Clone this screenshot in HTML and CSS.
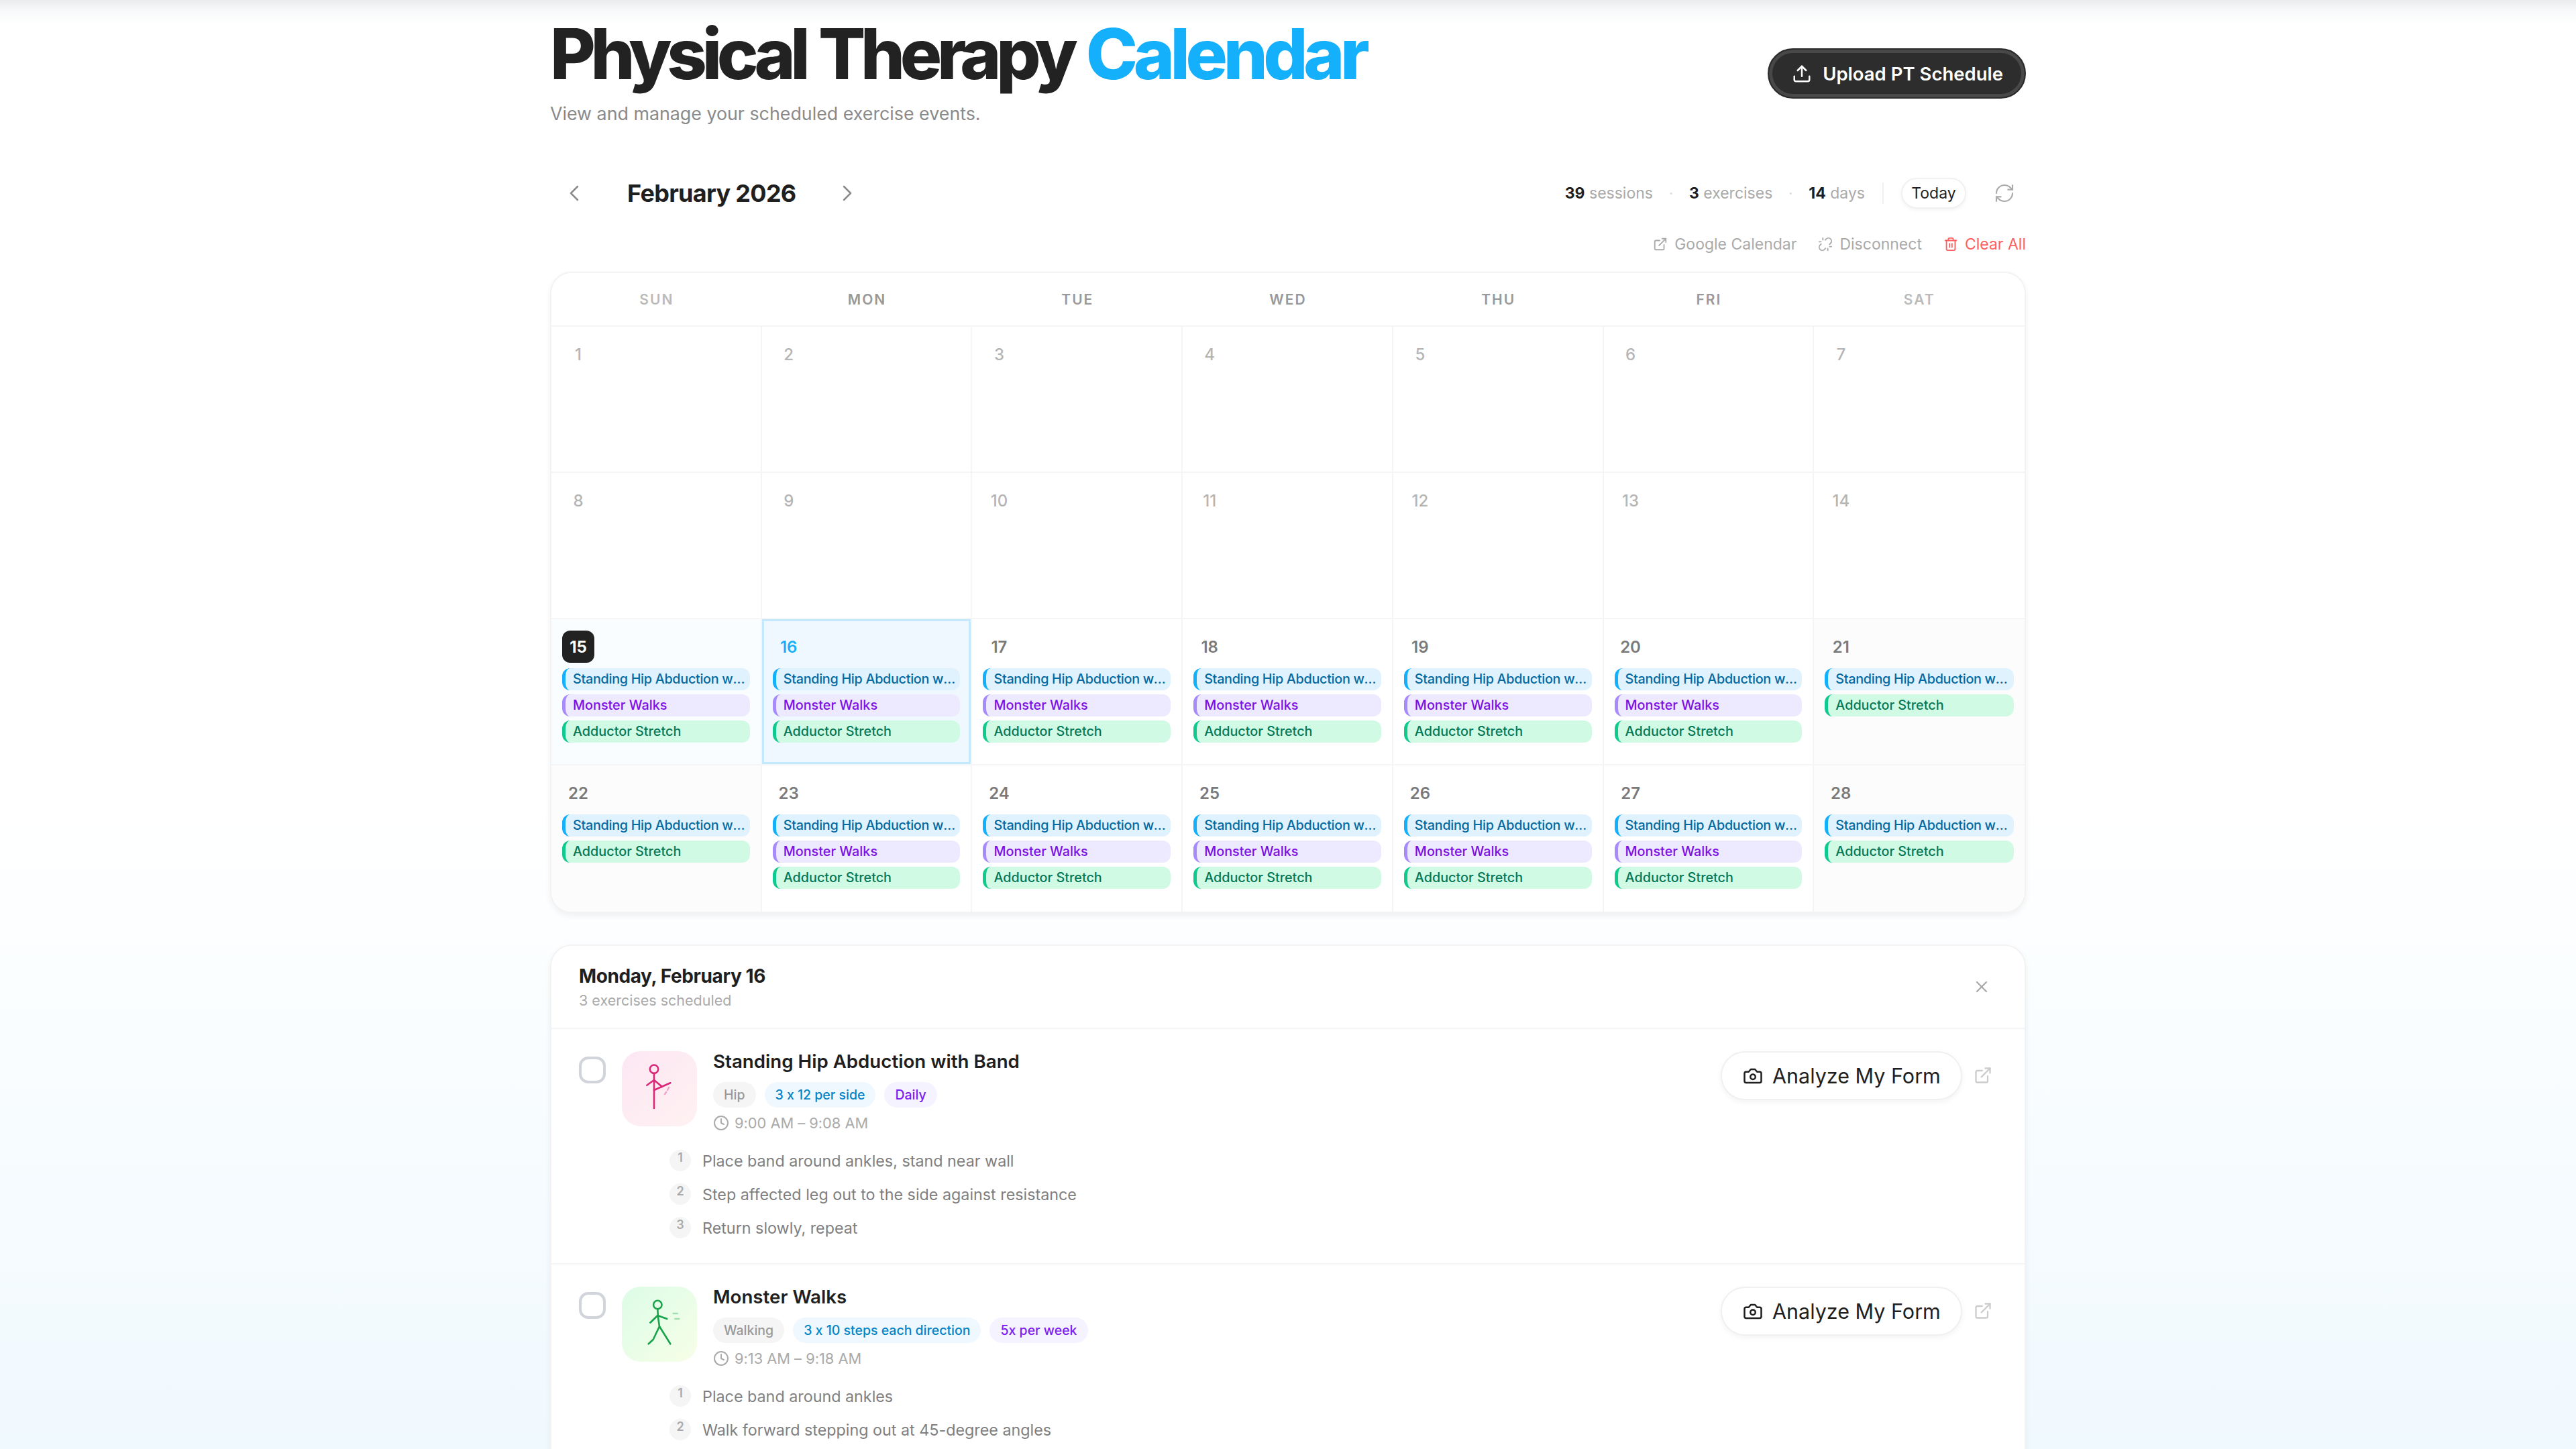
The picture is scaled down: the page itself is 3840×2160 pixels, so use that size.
FILE: index.html
```html
<!DOCTYPE html>
<html>
<head>
    <title>Physical Therapy Calendar</title>
    <link rel="stylesheet" href="styles.css">
</head>
<body>
    <div class="top-shade"></div>
    <div class="page">
        <div class="page-head">
            <div>
                <h1>Physical Therapy <span class="accent">Calendar</span></h1>
                <p class="subtitle">View and manage your scheduled exercise events.</p>
            </div>
            <button class="upload-btn">
                <svg class="icon" width="30" height="30" viewBox="0 0 24 24"><path d="M21 15v4a2 2 0 0 1-2 2H5a2 2 0 0 1-2-2v-4"/><polyline points="17 8 12 3 7 8"/><line x1="12" y1="3" x2="12" y2="15"/></svg>
                Upload PT Schedule
            </button>
        </div>

        <div class="month-row">
            <div class="month-nav">
                <svg class="icon chevron" width="40" height="40" viewBox="0 0 24 24"><path d="m15 18-6-6 6-6"/></svg>
                <h2>February 2026</h2>
                <svg class="icon chevron" width="40" height="40" viewBox="0 0 24 24"><path d="m9 18 6-6-6-6"/></svg>
            </div>
            <div class="stats">
                <span class="stat"><b>39</b> sessions</span>
                <span class="dot">·</span>
                <span class="stat"><b>3</b> exercises</span>
                <span class="dot">·</span>
                <span class="stat"><b>14</b> days</span>
                <span class="stats-divider"></span>
                <button class="today-btn">Today</button>
                <svg class="icon refresh" width="32" height="32" viewBox="0 0 24 24"><path d="M3 12a9 9 0 0 1 9-9 9.75 9.75 0 0 1 6.74 2.74L21 8"/><path d="M21 3v5h-5"/><path d="M21 12a9 9 0 0 1-9 9 9.75 9.75 0 0 1-6.74-2.74L3 16"/><path d="M8 16H3v5"/></svg>
            </div>
        </div>

        <div class="actions">
            <span class="action">
                <svg class="icon" width="22" height="22" viewBox="0 0 24 24"><path d="M18 13v6a2 2 0 0 1-2 2H5a2 2 0 0 1-2-2V8a2 2 0 0 1 2-2h6"/><polyline points="15 3 21 3 21 9"/><line x1="10" y1="14" x2="21" y2="3"/></svg>
                Google Calendar
            </span>
            <span class="action">
                <svg class="icon" width="22" height="22" viewBox="0 0 24 24"><path d="m18.84 12.25 1.72-1.71h-.02a5.004 5.004 0 0 0-.12-7.07 5.006 5.006 0 0 0-6.95 0l-1.72 1.71"/><path d="m5.17 11.75-1.71 1.71a5.004 5.004 0 0 0 .12 7.07 5.006 5.006 0 0 0 6.95 0l1.71-1.71"/><line x1="8" y1="2" x2="8" y2="5"/><line x1="2" y1="8" x2="5" y2="8"/><line x1="16" y1="19" x2="16" y2="22"/><line x1="19" y1="16" x2="22" y2="16"/></svg>
                Disconnect
            </span>
            <span class="action danger">
                <svg class="icon" width="22" height="22" viewBox="0 0 24 24"><path d="M3 6h18"/><path d="M19 6v14c0 1-1 2-2 2H7c-1 0-2-1-2-2V6"/><path d="M8 6V4c0-1 1-2 2-2h4c1 0 2 1 2 2v2"/><line x1="10" y1="11" x2="10" y2="17"/><line x1="14" y1="11" x2="14" y2="17"/></svg>
                Clear All
            </span>
        </div>

        <div class="card calendar">
            <div class="weekdays">
                <div class="weekend">SUN</div><div>MON</div><div>TUE</div><div>WED</div><div>THU</div><div>FRI</div><div class="weekend">SAT</div>
            </div>
            <div class="days">
                <div class="day"><span class="num muted">1</span></div>
                <div class="day"><span class="num muted">2</span></div>
                <div class="day"><span class="num muted">3</span></div>
                <div class="day"><span class="num muted">4</span></div>
                <div class="day"><span class="num muted">5</span></div>
                <div class="day"><span class="num muted">6</span></div>
                <div class="day"><span class="num muted">7</span></div>
                <div class="day"><span class="num muted">8</span></div>
                <div class="day"><span class="num muted">9</span></div>
                <div class="day"><span class="num muted">10</span></div>
                <div class="day"><span class="num muted">11</span></div>
                <div class="day"><span class="num muted">12</span></div>
                <div class="day"><span class="num muted">13</span></div>
                <div class="day"><span class="num muted">14</span></div>

                <div class="day today">
                    <span class="num">15</span>
                    <div class="chip blue">Standing Hip Abduction with Band</div>
                    <div class="chip purple">Monster Walks</div>
                    <div class="chip green">Adductor Stretch</div>
                </div>
                <div class="day selected">
                    <span class="num">16</span>
                    <div class="chip blue">Standing Hip Abduction with Band</div>
                    <div class="chip purple">Monster Walks</div>
                    <div class="chip green">Adductor Stretch</div>
                </div>
                <div class="day">
                    <span class="num">17</span>
                    <div class="chip blue">Standing Hip Abduction with Band</div>
                    <div class="chip purple">Monster Walks</div>
                    <div class="chip green">Adductor Stretch</div>
                </div>
                <div class="day">
                    <span class="num">18</span>
                    <div class="chip blue">Standing Hip Abduction with Band</div>
                    <div class="chip purple">Monster Walks</div>
                    <div class="chip green">Adductor Stretch</div>
                </div>
                <div class="day">
                    <span class="num">19</span>
                    <div class="chip blue">Standing Hip Abduction with Band</div>
                    <div class="chip purple">Monster Walks</div>
                    <div class="chip green">Adductor Stretch</div>
                </div>
                <div class="day">
                    <span class="num">20</span>
                    <div class="chip blue">Standing Hip Abduction with Band</div>
                    <div class="chip purple">Monster Walks</div>
                    <div class="chip green">Adductor Stretch</div>
                </div>
                <div class="day tinted">
                    <span class="num">21</span>
                    <div class="chip blue">Standing Hip Abduction with Band</div>
                    <div class="chip green">Adductor Stretch</div>
                </div>

                <div class="day tinted">
                    <span class="num">22</span>
                    <div class="chip blue">Standing Hip Abduction with Band</div>
                    <div class="chip green">Adductor Stretch</div>
                </div>
                <div class="day">
                    <span class="num">23</span>
                    <div class="chip blue">Standing Hip Abduction with Band</div>
                    <div class="chip purple">Monster Walks</div>
                    <div class="chip green">Adductor Stretch</div>
                </div>
                <div class="day">
                    <span class="num">24</span>
                    <div class="chip blue">Standing Hip Abduction with Band</div>
                    <div class="chip purple">Monster Walks</div>
                    <div class="chip green">Adductor Stretch</div>
                </div>
                <div class="day">
                    <span class="num">25</span>
                    <div class="chip blue">Standing Hip Abduction with Band</div>
                    <div class="chip purple">Monster Walks</div>
                    <div class="chip green">Adductor Stretch</div>
                </div>
                <div class="day">
                    <span class="num">26</span>
                    <div class="chip blue">Standing Hip Abduction with Band</div>
                    <div class="chip purple">Monster Walks</div>
                    <div class="chip green">Adductor Stretch</div>
                </div>
                <div class="day">
                    <span class="num">27</span>
                    <div class="chip blue">Standing Hip Abduction with Band</div>
                    <div class="chip purple">Monster Walks</div>
                    <div class="chip green">Adductor Stretch</div>
                </div>
                <div class="day tinted">
                    <span class="num">28</span>
                    <div class="chip blue">Standing Hip Abduction with Band</div>
                    <div class="chip green">Adductor Stretch</div>
                </div>
            </div>
        </div>

        <div class="card detail">
            <div class="detail-head">
                <div>
                    <h3>Monday, February 16</h3>
                    <p class="detail-sub">3 exercises scheduled</p>
                </div>
                <svg class="icon close" width="28" height="28" viewBox="0 0 24 24"><path d="M18 6 6 18"/><path d="m6 6 12 12"/></svg>
            </div>

            <div class="exercise">
                <div class="exercise-top">
                    <span class="check"></span>
                    <svg class="figure pink" width="112" height="112" viewBox="0 0 112 112">
                        <circle cx="48" cy="26.7" r="6.2"/>
                        <path d="M48 33v52"/>
                        <path d="M37.3 50.7 48 43l12 10"/>
                        <path d="M48 58l24.3-10.7"/>
                        <path class="faint" d="M70 54l-2 4M66 61l-2 3"/>
                    </svg>
                    <div class="exercise-info">
                        <h4>Standing Hip Abduction with Band</h4>
                        <div class="tags">
                            <span class="tag grey">Hip</span>
                            <span class="tag sky">3 x 12 per side</span>
                            <span class="tag violet">Daily</span>
                        </div>
                        <div class="time">
                            <svg class="icon" width="24" height="24" viewBox="0 0 24 24"><circle cx="12" cy="12" r="10"/><polyline points="12 6 12 12 16 14"/></svg>
                            9:00 AM – 9:08 AM
                        </div>
                    </div>
                    <button class="analyze-btn">
                        <svg class="icon" width="30" height="30" viewBox="0 0 24 24"><path d="M14.5 4h-5L7 7H4a2 2 0 0 0-2 2v9a2 2 0 0 0 2 2h16a2 2 0 0 0 2-2V9a2 2 0 0 0-2-2h-3l-2.5-3z"/><circle cx="12" cy="13" r="3"/></svg>
                        Analyze My Form
                    </button>
                    <svg class="icon ext" width="28" height="28" viewBox="0 0 24 24"><path d="M18 13v6a2 2 0 0 1-2 2H5a2 2 0 0 1-2-2V8a2 2 0 0 1 2-2h6"/><polyline points="15 3 21 3 21 9"/><line x1="10" y1="14" x2="21" y2="3"/></svg>
                </div>
                <ol class="steps">
                    <li><span class="step-no">1</span>Place band around ankles, stand near wall</li>
                    <li><span class="step-no">2</span>Step affected leg out to the side against resistance</li>
                    <li><span class="step-no">3</span>Return slowly, repeat</li>
                </ol>
            </div>

            <div class="exercise">
                <div class="exercise-top">
                    <span class="check"></span>
                    <svg class="figure mint" width="112" height="112" viewBox="0 0 112 112">
                        <circle cx="53.3" cy="27" r="6.2"/>
                        <path d="M53.3 33.5 54 46l2 13.3"/>
                        <path d="M42.3 53.7 53.3 43l14 5"/>
                        <path d="M39.7 85.3 46.7 78.7 56 59.3l16.3 26"/>
                        <path class="faint" d="M76.7 40h6M79.3 48h6"/>
                    </svg>
                    <div class="exercise-info">
                        <h4>Monster Walks</h4>
                        <div class="tags">
                            <span class="tag grey">Walking</span>
                            <span class="tag sky">3 x 10 steps each direction</span>
                            <span class="tag violet">5x per week</span>
                        </div>
                        <div class="time">
                            <svg class="icon" width="24" height="24" viewBox="0 0 24 24"><circle cx="12" cy="12" r="10"/><polyline points="12 6 12 12 16 14"/></svg>
                            9:13 AM – 9:18 AM
                        </div>
                    </div>
                    <button class="analyze-btn">
                        <svg class="icon" width="30" height="30" viewBox="0 0 24 24"><path d="M14.5 4h-5L7 7H4a2 2 0 0 0-2 2v9a2 2 0 0 0 2 2h16a2 2 0 0 0 2-2V9a2 2 0 0 0-2-2h-3l-2.5-3z"/><circle cx="12" cy="13" r="3"/></svg>
                        Analyze My Form
                    </button>
                    <svg class="icon ext" width="28" height="28" viewBox="0 0 24 24"><path d="M18 13v6a2 2 0 0 1-2 2H5a2 2 0 0 1-2-2V8a2 2 0 0 1 2-2h6"/><polyline points="15 3 21 3 21 9"/><line x1="10" y1="14" x2="21" y2="3"/></svg>
                </div>
                <ol class="steps">
                    <li><span class="step-no">1</span>Place band around ankles</li>
                    <li><span class="step-no">2</span>Walk forward stepping out at 45-degree angles</li>
                </ol>
            </div>
        </div>
    </div>
</body>
</html>
```

FILE: styles.css
```css
* {
    box-sizing: border-box;
}

html, body {
    height: 2160px;
    overflow: hidden;
}

body {
    margin: 0;
    font-family: Inter, "Liberation Sans", sans-serif;
    font-feature-settings: "calt" 0;
    color: #1f1f1f;
    background: linear-gradient(180deg, #ffffff 55%, #f0f9fe 100%);
}

.top-shade {
    position: absolute;
    top: 0;
    left: 0;
    right: 0;
    height: 38px;
    background: linear-gradient(180deg, #e9ebed 0%, #f8f9fa 40%, rgba(255, 255, 255, 0) 100%);
}

.page {
    position: relative;
    width: 2200px;
    margin: 0 auto;
    padding-top: 28px;
}

.icon {
    fill: none;
    stroke: currentColor;
    stroke-width: 2;
    stroke-linecap: round;
    stroke-linejoin: round;
    flex-shrink: 0;
}

button {
    font-family: inherit;
    font-feature-settings: inherit;
    cursor: pointer;
}

/* header */
.page-head {
    display: flex;
    justify-content: space-between;
    align-items: center;
}

h1 {
    margin: 0;
    font-size: 104px;
    line-height: 104px;
    font-weight: 800;
    letter-spacing: -7.3px;
    word-spacing: 4px;
    color: #222;
}

.accent {
    color: #14b0fc;
    letter-spacing: -6.4px;
}

.subtitle {
    margin: 19px 0 0;
    font-size: 26.8px;
    line-height: 36px;
    color: #8a8a8a;
}

.upload-btn {
    display: flex;
    align-items: center;
    gap: 16px;
    height: 75px;
    padding: 0 32px 0 34px;
    margin-top: 4px;
    border: 2px solid #2b2b2b;
    border-radius: 38px;
    background: #2d2d2d;
    box-shadow: inset 0 0 0 5px #484848;
    color: #fff;
    font-size: 27.5px;
    font-weight: 600;
}

/* month row */
.month-row {
    display: flex;
    justify-content: space-between;
    align-items: center;
    height: 46px;
    margin-top: 78px;
}

.month-nav {
    display: flex;
    align-items: center;
    padding-left: 16px;
}

.chevron {
    color: #8a8a8a;
    stroke-width: 1.5;
}

.month-nav h2 {
    width: 367px;
    margin: 0;
    padding-left: 59px;
    font-size: 36px;
    font-weight: 700;
    letter-spacing: -0.7px;
    white-space: nowrap;
    color: #1f1f1f;
}

.stats {
    display: flex;
    align-items: center;
    font-size: 23px;
    color: #aaa;
}

.stat b {
    color: #1f1f1f;
    font-weight: 700;
}

.dot {
    width: 54px;
    text-align: center;
    color: #ddd;
}

.stats-divider {
    width: 2px;
    height: 32px;
    margin: 0 26px;
    background: #efefef;
}

.today-btn {
    width: 97px;
    height: 46px;
    padding: 0;
    border: 2px solid #f1f1f1;
    border-radius: 23px;
    background: #fff;
    box-shadow: 0 2px 6px rgba(0, 0, 0, 0.05);
    color: #1f1f1f;
    font-size: 23px;
}

.refresh {
    color: #aaa;
    stroke-width: 1.6;
    margin: 0 16px 0 41px;
}

.actions {
    display: flex;
    justify-content: flex-end;
    align-items: center;
    gap: 32px;
    height: 30px;
    margin-top: 38px;
    font-size: 23px;
    color: #aaa;
}

.action {
    display: flex;
    align-items: center;
    gap: 10px;
}

.danger {
    color: #ff5f5f;
}

/* calendar */
.card {
    background: #fff;
    border: 2px solid #f3f3f3;
    border-radius: 32px;
    box-shadow: 0 4px 10px rgba(0, 0, 0, 0.06);
    overflow: hidden;
}

.calendar {
    margin-top: 26px;
}

.weekdays {
    display: grid;
    grid-template-columns: repeat(7, minmax(0, 1fr));
    height: 80px;
    border-bottom: 2px solid #f5f5f5;
}

.weekdays div {
    text-align: center;
    line-height: 80px;
    font-size: 21px;
    font-weight: 600;
    letter-spacing: 2px;
    color: #999;
}

.weekdays .weekend {
    color: #bbb;
}

.days {
    display: grid;
    grid-template-columns: repeat(7, minmax(0, 1fr));
    grid-auto-rows: 218px;
}

.day {
    min-width: 0;
    padding: 17px 16px 0;
    border-right: 2px solid #f5f5f5;
    border-bottom: 2px solid #f5f5f5;
}

.day:nth-child(7n) {
    border-right: none;
}

.day:nth-last-child(-n+7) {
    border-bottom: none;
}

.tinted {
    background: #fcfcfc;
}

.today {
    background: #fafdff;
}

.selected {
    background: #f0f8ff;
    box-shadow: inset 0 0 0 3px #c4e9ff;
}

.num {
    display: flex;
    align-items: center;
    justify-content: center;
    width: 48px;
    height: 48px;
    margin-bottom: 8px;
    border-radius: 12px;
    font-size: 24px;
    font-weight: 600;
    color: #7a7a7a;
}

.num.muted {
    color: #b5b5b5;
    font-weight: 500;
}

.today .num {
    background: #222;
    color: #fff;
    font-weight: 700;
}

.selected .num {
    color: #14b0fc;
}

.chip {
    height: 33px;
    margin-bottom: 6px;
    padding: 0 6px 0 11px;
    border-left: 5px solid;
    border-radius: 12px;
    font-size: 19.8px;
    font-weight: 500;
    line-height: 32px;
    white-space: nowrap;
    overflow: hidden;
    text-overflow: ellipsis;
}

.chip.blue {
    background: #e0f2fe;
    border-color: #14b0fc;
    color: #0369a1;
    letter-spacing: -0.3px;
}

.chip.purple {
    background: #ede9fe;
    border-color: #a78bfa;
    color: #7c0fe6;
}

.chip.green {
    background: #d1fae5;
    border-color: #10c98f;
    color: #047857;
}

/* selected day panel */
.detail {
    margin-top: 47px;
}

.detail-head {
    display: flex;
    justify-content: space-between;
    align-items: center;
    height: 124px;
    padding: 0 50px 0 41px;
    border-bottom: 2px solid #f5f5f5;
}

h3 {
    margin: 0;
    font-size: 28px;
    font-weight: 700;
    letter-spacing: -0.4px;
    color: #1f1f1f;
}

.detail-sub {
    margin: 6px 0 0;
    font-size: 21.5px;
    color: #aaa;
}

.close {
    color: #aaa;
}

.exercise {
    padding: 33px 48px 0 41px;
    height: 351px;
    border-bottom: 2px solid #f5f5f5;
}

.exercise-top {
    display: flex;
    align-items: flex-start;
}

.check {
    flex-shrink: 0;
    width: 40px;
    height: 40px;
    margin-top: 8px;
    border: 4px solid #d1d5db;
    border-radius: 14px;
    background: #fff;
}

.figure {
    flex-shrink: 0;
    margin-left: 24px;
    border-radius: 28px;
    fill: none;
    stroke-width: 2.6;
    stroke-linecap: round;
    stroke-linejoin: round;
}

.figure.pink {
    background: linear-gradient(135deg, #fce7f3, #fff1f2);
    stroke: #db2777;
}

.figure.mint {
    background: linear-gradient(135deg, #dcfce7, #f7fee7);
    stroke: #16a34a;
}

.figure .faint {
    opacity: 0.35;
}

.exercise-info {
    flex: 1;
    margin-left: 24px;
    margin-top: -2px;
}

h4 {
    margin: 0;
    font-size: 27.7px;
    line-height: 34px;
    font-weight: 600;
    color: #1f1f1f;
}

.tags {
    display: flex;
    gap: 13px;
    margin-top: 14px;
}

.tag {
    height: 38px;
    padding: 0 16px;
    border-radius: 19px;
    font-size: 19.5px;
    font-weight: 500;
    line-height: 38px;
}

.tag.grey {
    background: #f5f5f5;
    color: #999;
}

.tag.sky {
    background: #f0f8ff;
    color: #0284c7;
}

.tag.violet {
    background: #f5f3ff;
    color: #7c1cf0;
}

.time {
    display: flex;
    align-items: center;
    gap: 8px;
    margin-top: 10px;
    font-size: 21.8px;
    color: #aaa;
}

.analyze-btn {
    display: flex;
    align-items: center;
    gap: 14px;
    width: 360px;
    height: 73px;
    padding: 0 0 0 31px;
    border: 2px solid #f0f0f0;
    border-radius: 37px;
    background: #fff;
    box-shadow: 0 3px 8px rgba(0, 0, 0, 0.05);
    color: #1f1f1f;
    font-size: 30.5px;
}

.ext {
    color: #ccc;
    margin: 22px 0 0 17px;
}

.steps {
    list-style: none;
    margin: 0;
    padding: 18px 0 0 135px;
}

.steps li {
    display: flex;
    align-items: center;
    height: 50px;
    font-size: 23.3px;
    color: #7f7f7f;
}

.step-no {
    width: 32px;
    height: 32px;
    margin-right: 17px;
    padding-bottom: 8px;
    border-radius: 16px;
    background: #f5f5f5;
    color: #aaa;
    font-size: 18px;
    font-weight: 600;
    line-height: 24px;
    text-align: center;
}
```
